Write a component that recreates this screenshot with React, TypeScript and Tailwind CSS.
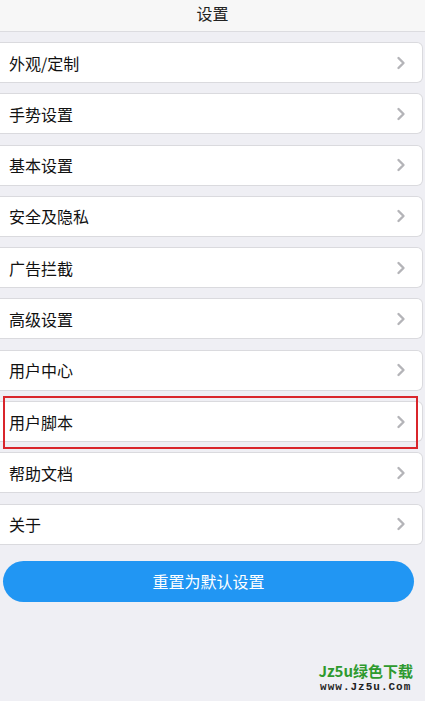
import React from 'react';

const items = [
  '外观/定制',
  '手势设置',
  '基本设置',
  '安全及隐私',
  '广告拦截',
  '高级设置',
  '用户中心',
  '用户脚本',
  '帮助文档',
  '关于',
];

const Chevron = () => (
  <svg width="10" height="14" viewBox="0 0 10 14" fill="none">
    <path d="M2.5 2 L7.5 7 L2.5 12" stroke="#b4b4b8" strokeWidth="2.4" strokeLinecap="round" strokeLinejoin="round" />
  </svg>
);

const App: React.FC = () => {
  return (
    <div
      className="relative w-[425px] h-[701px] bg-[#efeff4] overflow-hidden"
      style={{ fontFamily: '"Noto Sans CJK SC", "Liberation Sans", sans-serif' }}
    >
      <div className="h-[32px] bg-[#f7f7f7] border-b border-[#dcdce0] flex justify-center pt-[1px] text-[16px] text-[#222]">
        设置
      </div>

      <div className="mt-[10px] flex flex-col gap-[10.3px] pr-[2px]">
        {items.map((label, i) => (
          <div key={label} className="relative">
            <div className="h-[41px] bg-white border-y border-[#dadade] rounded-r-[6px] border-r flex items-center justify-between pl-[9px] pr-[16px] text-[16px] text-[#111]">
              <span>{label}</span>
              <Chevron />
            </div>
            {i === 7 && (
              <div className="absolute left-[3px] right-[5px] top-[-5px] bottom-[-7px] border-2 border-[#d9252b] pointer-events-none" />
            )}
          </div>
        ))}
      </div>

      <div className="mt-[16px] ml-[3px] mr-[11px]">
        <button className="w-full h-[41px] rounded-full bg-[#2196f3] text-white text-[16px] flex items-center justify-center">
          重置为默认设置
        </button>
      </div>

      <div className="absolute right-[12px] bottom-[8px] flex flex-col items-center leading-none">
        <span className="text-[15px] font-bold text-[#2e9a2e]">Jz5u绿色下载</span>
        <span className="mt-[4px] text-[11px] font-bold text-[#222] tracking-[1px]" style={{ fontFamily: '"Liberation Mono", monospace' }}>
          www.Jz5u.Com
        </span>
      </div>
    </div>
  );
};

export default App;
